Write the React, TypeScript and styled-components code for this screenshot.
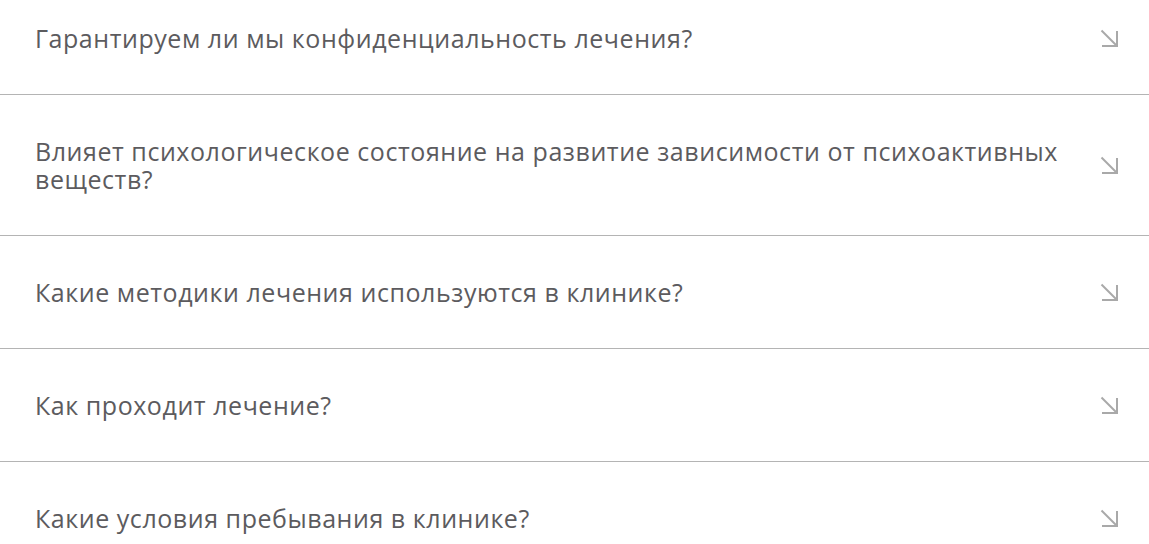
import React from "react";
import styled, { createGlobalStyle } from "styled-components";

const GlobalStyle = createGlobalStyle`
  html, body { margin: 0; padding: 0; background: #ffffff; }
  body { font-family: "Open Sans", "Noto Sans", sans-serif; }
  * { box-sizing: border-box; }
`;

const List = styled.div`
  display: flex;
  flex-direction: column;
  width: 1149px;
`;

const Item = styled.div`
  display: flex;
  align-items: center;
  gap: 24px;
  padding: 42px 31px 42px 35px;
  border-bottom: 1px solid #b4b4b4;
  cursor: pointer;

  &:first-child {
    padding-top: 24px;
  }
`;

const Question = styled.div`
  flex: 1;
  font-size: 25px;
  line-height: 28px;
  letter-spacing: 0.55px;
  color: #5c5b5e;
  font-weight: 400;
`;

const IconBox = styled.span`
  display: flex;
  width: 18px;
  height: 18px;
  flex-shrink: 0;
`;

const Arrow = () => (
  <IconBox>
    <svg width="18" height="18" viewBox="0 0 18 18" fill="none">
      <path d="M1.5 1.5 L16.5 16.5" stroke="#a9a9a9" strokeWidth="2" />
      <path d="M17 2 V17 H2" stroke="#a9a9a9" strokeWidth="2" />
    </svg>
  </IconBox>
);

const questions = [
  "Гарантируем ли мы конфиденциальность лечения?",
  "Влияет психологическое состояние на развитие зависимости от психоактивных веществ?",
  "Какие методики лечения используются в клинике?",
  "Как проходит лечение?",
  "Какие условия пребывания в клинике?",
];

export default function App() {
  return (
    <>
      <GlobalStyle />
      <List>
        {questions.map((q) => (
          <Item key={q}>
            <Question>{q}</Question>
            <Arrow />
          </Item>
        ))}
      </List>
    </>
  );
}
